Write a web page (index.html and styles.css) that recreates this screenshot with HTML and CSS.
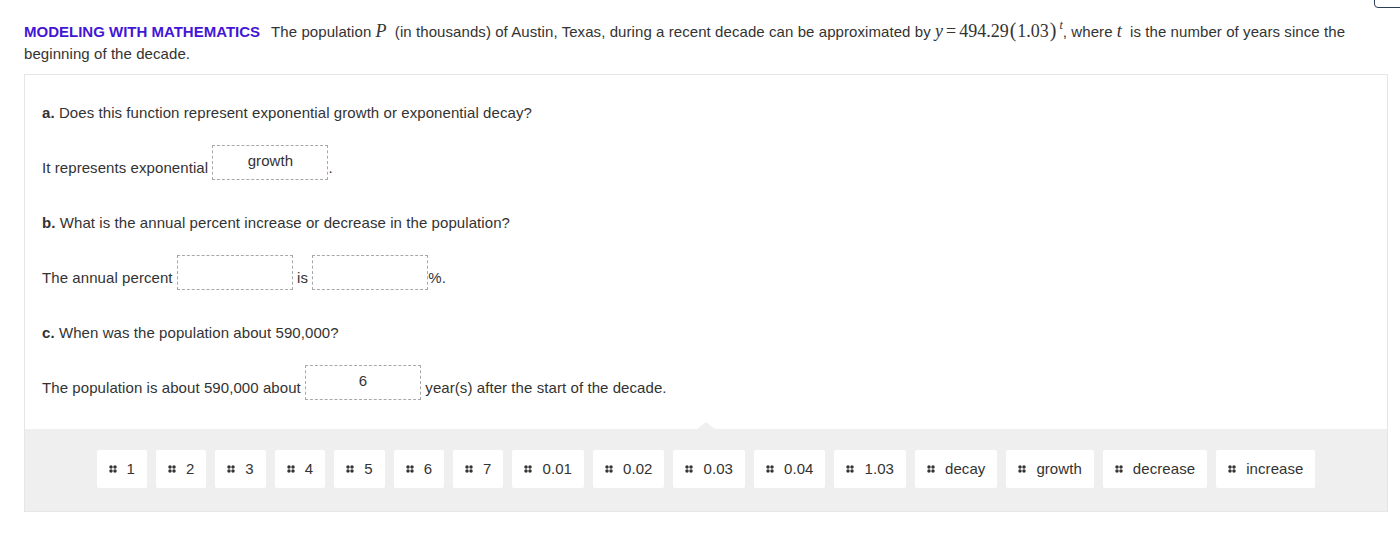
FILE: index.html
```html
<!DOCTYPE html>
<html>
<head>
<meta charset="utf-8">
<link rel="stylesheet" href="styles.css">
</head>
<body>
<div class="corner-btn"></div>
<div class="page">
  <p class="prompt"><span class="tag">MODELING WITH MATHEMATICS</span> The population <span class="mv"><i>P</i></span> (in thousands) of Austin, Texas, during a recent decade can be approximated by <span class="math"><i>y</i><span class="eq">=</span>494.29<span class="par">(</span>1.03<span class="par">)</span><sup><i>t</i></sup></span>, where <span class="mv"><i>t</i></span> is the number of years since the beginning of the decade.</p>
  <div class="panel">
    <div class="questions">
      <div class="q"><b>a.</b> Does this function represent exponential growth or exponential decay?</div>
      <div class="ans">It represents exponential <span class="drop">growth</span>.</div>
      <div class="q gap"><b>b.</b> What is the annual percent increase or decrease in the population?</div>
      <div class="ans">The annual percent <span class="drop"></span> is <span class="drop"></span>%.</div>
      <div class="q gap"><b>c.</b> When was the population about 590,000?</div>
      <div class="ans">The population is about 590,000 about <span class="drop">6</span> year(s) after the start of the decade.</div>
    </div>
    <div class="bank">
      <div class="tile"><svg class="grip" viewBox="0 0 8 8"><circle cx="2" cy="2" r="1.75"/><circle cx="6" cy="2" r="1.75"/><circle cx="2" cy="6" r="1.75"/><circle cx="6" cy="6" r="1.75"/></svg>1</div>
      <div class="tile"><svg class="grip" viewBox="0 0 8 8"><circle cx="2" cy="2" r="1.75"/><circle cx="6" cy="2" r="1.75"/><circle cx="2" cy="6" r="1.75"/><circle cx="6" cy="6" r="1.75"/></svg>2</div>
      <div class="tile"><svg class="grip" viewBox="0 0 8 8"><circle cx="2" cy="2" r="1.75"/><circle cx="6" cy="2" r="1.75"/><circle cx="2" cy="6" r="1.75"/><circle cx="6" cy="6" r="1.75"/></svg>3</div>
      <div class="tile"><svg class="grip" viewBox="0 0 8 8"><circle cx="2" cy="2" r="1.75"/><circle cx="6" cy="2" r="1.75"/><circle cx="2" cy="6" r="1.75"/><circle cx="6" cy="6" r="1.75"/></svg>4</div>
      <div class="tile"><svg class="grip" viewBox="0 0 8 8"><circle cx="2" cy="2" r="1.75"/><circle cx="6" cy="2" r="1.75"/><circle cx="2" cy="6" r="1.75"/><circle cx="6" cy="6" r="1.75"/></svg>5</div>
      <div class="tile"><svg class="grip" viewBox="0 0 8 8"><circle cx="2" cy="2" r="1.75"/><circle cx="6" cy="2" r="1.75"/><circle cx="2" cy="6" r="1.75"/><circle cx="6" cy="6" r="1.75"/></svg>6</div>
      <div class="tile"><svg class="grip" viewBox="0 0 8 8"><circle cx="2" cy="2" r="1.75"/><circle cx="6" cy="2" r="1.75"/><circle cx="2" cy="6" r="1.75"/><circle cx="6" cy="6" r="1.75"/></svg>7</div>
      <div class="tile"><svg class="grip" viewBox="0 0 8 8"><circle cx="2" cy="2" r="1.75"/><circle cx="6" cy="2" r="1.75"/><circle cx="2" cy="6" r="1.75"/><circle cx="6" cy="6" r="1.75"/></svg>0.01</div>
      <div class="tile"><svg class="grip" viewBox="0 0 8 8"><circle cx="2" cy="2" r="1.75"/><circle cx="6" cy="2" r="1.75"/><circle cx="2" cy="6" r="1.75"/><circle cx="6" cy="6" r="1.75"/></svg>0.02</div>
      <div class="tile"><svg class="grip" viewBox="0 0 8 8"><circle cx="2" cy="2" r="1.75"/><circle cx="6" cy="2" r="1.75"/><circle cx="2" cy="6" r="1.75"/><circle cx="6" cy="6" r="1.75"/></svg>0.03</div>
      <div class="tile"><svg class="grip" viewBox="0 0 8 8"><circle cx="2" cy="2" r="1.75"/><circle cx="6" cy="2" r="1.75"/><circle cx="2" cy="6" r="1.75"/><circle cx="6" cy="6" r="1.75"/></svg>0.04</div>
      <div class="tile"><svg class="grip" viewBox="0 0 8 8"><circle cx="2" cy="2" r="1.75"/><circle cx="6" cy="2" r="1.75"/><circle cx="2" cy="6" r="1.75"/><circle cx="6" cy="6" r="1.75"/></svg>1.03</div>
      <div class="tile"><svg class="grip" viewBox="0 0 8 8"><circle cx="2" cy="2" r="1.75"/><circle cx="6" cy="2" r="1.75"/><circle cx="2" cy="6" r="1.75"/><circle cx="6" cy="6" r="1.75"/></svg>decay</div>
      <div class="tile"><svg class="grip" viewBox="0 0 8 8"><circle cx="2" cy="2" r="1.75"/><circle cx="6" cy="2" r="1.75"/><circle cx="2" cy="6" r="1.75"/><circle cx="6" cy="6" r="1.75"/></svg>growth</div>
      <div class="tile"><svg class="grip" viewBox="0 0 8 8"><circle cx="2" cy="2" r="1.75"/><circle cx="6" cy="2" r="1.75"/><circle cx="2" cy="6" r="1.75"/><circle cx="6" cy="6" r="1.75"/></svg>decrease</div>
      <div class="tile"><svg class="grip" viewBox="0 0 8 8"><circle cx="2" cy="2" r="1.75"/><circle cx="6" cy="2" r="1.75"/><circle cx="2" cy="6" r="1.75"/><circle cx="6" cy="6" r="1.75"/></svg>increase</div>
    </div>
  </div>
</div>
</body>
</html>
```

FILE: styles.css
```css
html, body {
  margin: 0;
  padding: 0;
  background: #fff;
}
body {
  font-family: "Liberation Sans", Arial, Helvetica, sans-serif;
  font-size: 15px;
  letter-spacing: 0.075px;
  color: #333;
  overflow: hidden;
}
.corner-btn {
  position: absolute;
  left: 1374px;
  top: -20px;
  width: 40px;
  height: 26px;
  border: 1px solid #2c3e55;
  border-radius: 4px;
  background: #fff;
}
.page {
  width: 1364px;
  margin-left: 24px;
  padding-top: 21px;
}
.prompt {
  margin: 0;
  line-height: 22px;
}
.tag {
  font-weight: bold;
  color: #4316d6;
  letter-spacing: 0;
  margin-right: 7px;
}
.mv {
  font-family: "Liberation Serif", "Times New Roman", serif;
  font-size: 18px;
  line-height: 0;
  letter-spacing: 0;
  margin-right: 4px;
}
.math {
  font-family: "Liberation Serif", "Times New Roman", serif;
  font-size: 18px;
  line-height: 0;
  letter-spacing: 0;
}
.math .eq {
  margin: 0 3px;
}
.math .par {
  font-size: 20px;
  margin: 0 1px;
}
.math sup {
  font-size: 12px;
  line-height: 0;
  vertical-align: 8px;
  margin-left: 2px;
}
.panel {
  margin-top: 9px;
  border: 1px solid #e6e6e6;
}
.questions {
  padding: 27px 17px 29px;
}
.q {
  line-height: 22px;
}
.q b {
  font-weight: bold;
}
.q.gap {
  margin-top: 32px;
}
.ans {
  margin-top: 21px;
  line-height: 22px;
}
.drop {
  display: inline-block;
  vertical-align: 7px;
  box-sizing: border-box;
  width: 116px;
  height: 35px;
  border: 1px dashed #a8a8a8;
  padding-top: 6px;
  line-height: 18px;
  text-align: center;
}
.drop::before {
  content: "\200b";
}
.bank {
  position: relative;
  background: #efefef;
  padding: 21px 0 23px;
  display: flex;
  justify-content: center;
  gap: 9px;
}
.bank::before {
  content: "";
  position: absolute;
  left: 50%;
  top: -7px;
  margin-left: -9px;
  border-left: 9px solid transparent;
  border-right: 9px solid transparent;
  border-bottom: 7px solid #f0f0f0;
}
.tile {
  display: flex;
  align-items: center;
  height: 38px;
  padding: 0 12px;
  background: #fff;
  border-radius: 2px;
  line-height: 20px;
}
.grip {
  width: 8px;
  height: 8px;
  margin-right: 10px;
  fill: #333;
}
```
